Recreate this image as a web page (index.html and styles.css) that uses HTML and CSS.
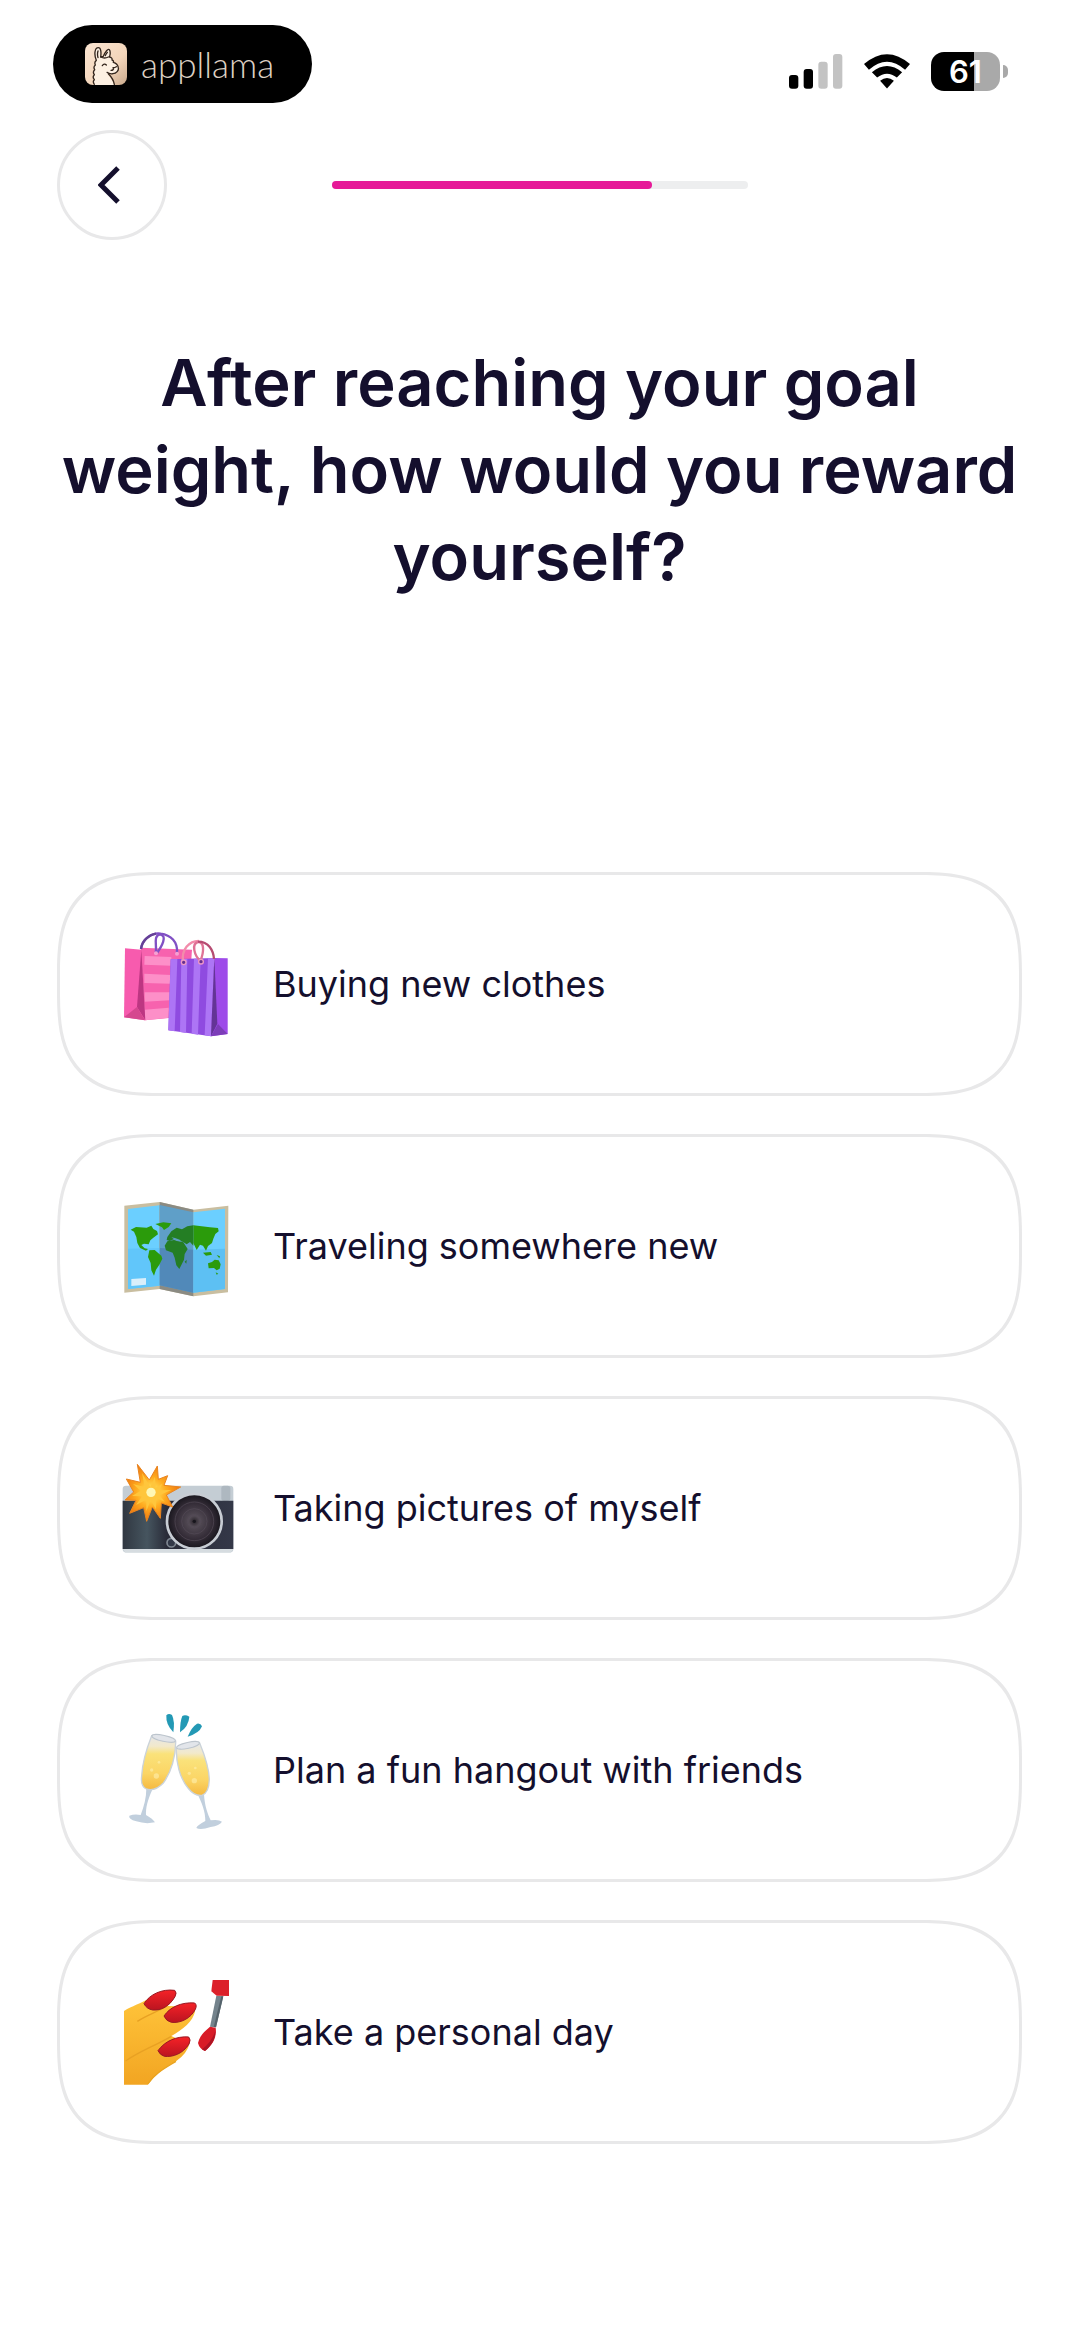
FILE: index.html
```html
<!DOCTYPE html>
<html lang="en">
<head>
  <meta charset="UTF-8">
  <meta name="viewport" content="width=device-width, initial-scale=1.0">
  <title>Reward</title>
  <link rel="stylesheet" href="styles.css">
</head>
<body>
  <div class="status">
    <div class="brand">
      <svg class="brand-icon" viewBox="0 0 126 126" aria-hidden="true">
        <defs>
          <linearGradient id="sand" x1="0" y1="0" x2="1" y2="1">
            <stop offset="0" stop-color="#fbe6d3"/>
            <stop offset=".6" stop-color="#f3d5ba"/>
            <stop offset="1" stop-color="#c9a98c"/>
          </linearGradient>
        </defs>
        <rect width="126" height="126" rx="24" fill="url(#sand)"/>
        <path d="M28 126q-6-10 0-16q-7-8 0-15q-6-8 1-15q-5-8 2-14q-4-9 3-14c-8-20-4-38 6-38c8 0 9 14 7 28l8-2c6-14 14-24 18-20c4 5 3 16 0 22q10 2 8 9q6 2 4 7c8 2 14 10 15 16c2 8-6 18-16 18q-8 2-16-2q2 8 8 14c6 8 10 14 12 22z" fill="#fdf0e2"/>
        <g fill="none" stroke="#33251c" stroke-width="4" stroke-linecap="round" stroke-linejoin="round">
          <path d="M28 124q-6-8 0-14q-7-8 0-15q-6-8 1-15q-5-8 2-14q-4-9 3-14c-8-20-4-38 6-38c8 0 9 14 7 28l8-2c6-14 14-24 18-20c4 5 3 16 0 22q10 2 8 9q6 2 4 7c8 2 14 10 15 16c2 8-6 18-16 18q-10 2-18-4"/>
          <path d="M70 92c8 8 16 20 18 32M39 24q-3 10 0 20M67 28q-5 6-6 10M52 68q6-8 12-2M84 74q6 0 10-3M86 74q0 8-8 8M48 42q10 6 22 0"/>
        </g>
      </svg>
      <span>appllama</span>
    </div>
    <div class="status-icons">
      <svg class="signal" viewBox="0 0 162 105" role="img" aria-label="Signal">
        <rect y="63" width="28" height="41" rx="9"/>
        <rect x="44" y="45" width="28" height="59" rx="9"/>
        <rect x="88" y="23" width="28" height="81" rx="9" fill="#c3c3c3"/>
        <rect x="132" width="28" height="104" rx="9" fill="#c3c3c3"/>
      </svg>
      <svg class="wifi" viewBox="0 0 140 105" role="img" aria-label="Wi-Fi">
        <path d="M0 30Q70-30 140 30L125 47Q70-2 15 47z"/>
        <path d="M24 55Q70 17 116 55L100 71Q70 47 40 71z"/>
        <path d="M49 81Q70 63 91 81L70 104z"/>
      </svg>
      <div class="battery"><span class="battery-body">61</span><span class="battery-cap"></span></div>
    </div>
  </div>

  <div class="nav">
    <button class="back" type="button" aria-label="Back">
      <svg viewBox="0 0 22 38" aria-hidden="true"><path d="M20 2L3 19L20 36" fill="none" stroke="#140f2d" stroke-width="5"/></svg>
    </button>
    <div class="progress"><div class="progress-fill" style="width: 77%"></div></div>
  </div>

  <main>
    <h1>After reaching your goal weight, how would you reward yourself?</h1>
    <div class="options">
      <button class="option" type="button">
        <svg viewBox="60 55 336 336" aria-hidden="true">
          <path d="M75 116L124 120L135 332L72 323z" fill="#f75bae"/>
          <path d="M122 114L276 120L262 320L135 332z" fill="#f762ae"/>
          <path d="M134 139L214 142V168L133 165zM133 192L212 196V222L133 220zM134 248L210 248V272L134 276zM134 300L206 294V324L135 332z" fill="#fd8fc8"/>
          <path d="M124 120L136 332L111 292z" fill="#bd3682"/>
          <path d="M72 323L111 292L135 332z" fill="#d5478f"/>
          <g fill="none" stroke="#8050c4" stroke-width="7">
            <path d="M123 118C126 86 158 68 182 72C212 76 234 96 231 130"/>
            <path d="M167 128C172 112 158 78 180 74C204 78 184 112 171 130"/>
          </g>
          <path d="M123 118C127 92 148 75 168 72" fill="none" stroke="#654196" stroke-width="7"/>
          <circle cx="168" cy="131" r="6" fill="#f6a0d2"/>
          <circle cx="231" cy="132" r="6" fill="#f6a0d2"/>
          <path d="M212 149L343 145L333 380L205 362z" fill="#8f4be0"/>
          <path d="M212 149L232 148L224 365L205 362zM244 148L262 148L258 370L240 367zM282 147L302 146L294 375L275 372zM324 146L343 145L333 380L314 377z" fill="#ad75f5"/>
          <path d="M343 145L383 146V373L333 380z" fill="#9e4be9"/>
          <path d="M343 145L352 342L333 380z" fill="#633496"/>
          <path d="M333 380L354 343L383 373z" fill="#7c3db8"/>
          <path d="M249 156C244 118 268 94 296 94" fill="none" stroke="#f28cab" stroke-width="7"/>
          <path d="M301 154C312 128 314 96 294 97C274 102 282 138 302 154" fill="none" stroke="#df7396" stroke-width="7"/>
          <path d="M294 96C326 96 340 122 342 148" fill="none" stroke="#b64c72" stroke-width="7"/>
          <g fill="#653091" stroke="#ee98c5" stroke-width="4">
            <circle cx="251" cy="158" r="7"/>
            <circle cx="303" cy="156" r="7"/>
          </g>
        </svg>
        <span>Buying new clothes</span>
      </button>

      <button class="option" type="button">
        <svg viewBox="60 31 336 336" aria-hidden="true">
          <path d="M73 78L179 67L280 90L385 78L384 338L280 350L179 328L73 339z" fill="#c9bea0"/>
          <path d="M84 88L179 77V318L84 328z" fill="#6bcfff"/>
          <path d="M179 67L280 90V350L179 328z" fill="#8b8b83"/>
          <path d="M179 76L280 98V339L179 317z" fill="#5f9fc8"/>
          <path d="M280 98L375 87V328L280 339z" fill="#6bcfff"/>
          <path d="M84 207L179 205V318L84 328z" fill="#61c6fa"/>
          <path d="M179 205L280 210V339L179 317z" fill="#5189b9"/>
          <path d="M280 210L375 207V328L280 339z" fill="#5dc0f3"/>
          <g fill="#2b9b0b">
            <path d="M92 150L108 142L140 144L154 138L160 148L171 154L174 164L160 174L151 182L146 194L132 192L124 196L134 206L144 208L138 213L120 205L112 190L109 172L102 156z"/>
            <path d="M166 133L190 128L214 131L206 142L192 151L186 143z"/>
            <path d="M148 212L164 211L184 228L187 237L178 255L168 270L162 288L154 272L152 250L144 232z"/>
            <path d="M280 137L330 143L354 145L356 155L346 163L340 177L336 190L324 199L318 213L309 198L300 195L290 211L280 190z"/>
            <path d="M324 251L336 247L344 240L356 242L362 254L359 267L350 272L342 265L326 266z"/>
            <path d="M309 219L332 217L336 225L318 228zM350 226L360 230L358 236zM347 278L355 282L350 285z"/>
          </g>
          <g fill="#247e24">
            <path d="M202 172L214 155L230 144L246 149L262 140L280 137V198L270 187L260 194L248 186L234 184L224 177L209 184L200 181z"/>
            <path d="M202 185L222 181L250 188L263 208L254 223L252 240L238 268L229 257L224 234L218 219L198 212L194 198z"/>
            <path d="M254 246L260 240L259 252z"/>
          </g>
          <path d="M214 173L225 175L239 180L246 186L230 184z" fill="#5d9fc0"/>
          <path d="M94 298L138 295V315L94 319z" fill="#d9effb"/>
        </svg>
        <span>Traveling somewhere new</span>
      </button>

      <button class="option" type="button">
        <svg viewBox="60 37 336 336" aria-hidden="true">
          <defs>
            <linearGradient id="body">
              <stop offset="0" stop-color="#303741"/>
              <stop offset=".22" stop-color="#46555f"/>
              <stop offset=".4" stop-color="#292b38"/>
              <stop offset="1" stop-color="#343848"/>
            </linearGradient>
            <radialGradient id="lens">
              <stop offset="0" stop-color="#282329"/>
              <stop offset=".2" stop-color="#534b55"/>
              <stop offset=".65" stop-color="#352d38"/>
              <stop offset="1" stop-color="#17151c"/>
            </radialGradient>
            <radialGradient id="flash" cx="153" cy="158" r="90" gradientUnits="userSpaceOnUse">
              <stop offset="0" stop-color="#fffbd0"/>
              <stop offset=".18" stop-color="#ffd84f"/>
              <stop offset=".5" stop-color="#ffac20"/>
              <stop offset="1" stop-color="#ed740c"/>
            </radialGradient>
          </defs>
          <rect x="68" y="138" width="332" height="200" rx="10" fill="#c4cdd4"/>
          <rect x="364" y="138" width="27" height="46" rx="8" fill="#aeb8c0"/>
          <path d="M68 183H400V328H68z" fill="url(#body)"/>
          <path d="M68 328H400L392 339H76z" fill="#d6dce0"/>
          <circle cx="214" cy="309" r="13" fill="#323847" stroke="#7f8791" stroke-width="5"/>
          <circle cx="283" cy="245" r="82" fill="url(#lens)" stroke="#c8cdd4" stroke-width="8"/>
          <g fill="none" stroke="#554c57" stroke-width="2">
            <circle cx="283" cy="245" r="58"/>
            <circle cx="283" cy="245" r="38"/>
            <circle cx="283" cy="245" r="20"/>
          </g>
          <circle cx="283" cy="245" r="5" fill="#17151c"/>
          <path d="M112 74L148 121L172 79L175 119L203 108L192 137L242 142L199 166L218 202L184 190L181 236L157 202L140 245L131 204L89 221L108 182L75 181L101 157L79 118L121 128z" fill="url(#flash)" stroke="#e98420" stroke-width="3"/>
          <path d="M126 100L151 142L165 111L167 144L187 132L178 152L214 151L179 167L194 186L169 176L168 209L152 182L139 215L139 180L108 196L126 170L96 169L122 153L99 133L134 142z" fill="#ffc63c"/>
          <circle cx="153" cy="158" r="14" fill="#fff8b5"/>
        </svg>
        <span>Taking pictures of myself</span>
      </button>

      <button class="option" type="button">
        <svg viewBox="60 43 336 336" aria-hidden="true">
          <defs>
            <linearGradient id="wine" x1="0" y1="0" x2="0" y2="1">
              <stop offset="0" stop-color="#e6e7ea"/>
              <stop offset=".2" stop-color="#f2e9cb"/>
              <stop offset=".34" stop-color="#fae27a"/>
              <stop offset=".7" stop-color="#fbd565"/>
              <stop offset="1" stop-color="#f5b941"/>
            </linearGradient>
          </defs>
          <g fill="#2399b5">
            <path d="M199 47Q206 40 216 46Q225 65 220 98Q197 75 199 47z"/>
            <path d="M247 49Q256 44 268 51Q266 80 240 98Q240 65 247 49z"/>
            <path d="M291 72Q302 70 306 80Q298 101 263 111Q274 83 291 72z"/>
          </g>
          <path d="M139 266L158 268C142 302 137 326 138 346Q159 358 165 368Q136 374 109 365Q84 358 88 348Q104 342 122 346C132 321 139 294 139 266z" fill="#c1cfdd"/>
          <path d="M294 286L312 284C314 319 323 343 332 362Q355 358 366 366Q359 378 332 382Q302 392 289 385Q291 377 316 364C316 334 305 310 294 286z" fill="#c1cfdd"/>
          <path d="M155 108Q190 104 227 124C228 168 214 218 190 250Q165 276 139 268Q121 259 125 229C127 188 140 146 155 108z" fill="url(#wine)" stroke="#cbd3da" stroke-width="4"/>
          <path d="M229 147Q263 124 299 130C315 169 327 202 328 239Q327 280 306 287Q283 290 264 265C239 235 228 188 229 147z" fill="url(#wine)" stroke="#cbd3da" stroke-width="4"/>
          <ellipse cx="191" cy="116" rx="36" ry="9" fill="#e2e5ea" stroke="#bdc5cd" stroke-width="3" transform="rotate(12 191 116)"/>
          <ellipse cx="264" cy="137" rx="35" ry="9" fill="#e2e5ea" stroke="#bdc5cd" stroke-width="3" transform="rotate(-12 264 137)"/>
          <g fill="#fff0ae" opacity=".6">
            <circle cx="169" cy="229" r="8"/>
            <circle cx="155" cy="211" r="5"/>
            <circle cx="177" cy="188" r="4"/>
            <circle cx="283" cy="243" r="8"/>
            <circle cx="268" cy="221" r="5"/>
            <circle cx="286" cy="205" r="4"/>
          </g>
        </svg>
        <span>Plan a fun hangout with friends</span>
      </button>

      <button class="option" type="button">
        <svg viewBox="60 49 336 336" aria-hidden="true">
          <defs>
            <linearGradient id="skin" x1="0" y1="0" x2="0" y2="1">
              <stop offset="0" stop-color="#ffc53b"/>
              <stop offset="1" stop-color="#f2a522"/>
            </linearGradient>
            <linearGradient id="nail" x1="0" y1="0" x2="0" y2="1">
              <stop offset="0" stop-color="#f52227"/>
              <stop offset="1" stop-color="#bb1420"/>
            </linearGradient>
          </defs>
          <path d="M72 154C98 138 118 134 148 116L222 108Q218 128 202 139L230 140L286 146C286 176 258 205 214 229L246 244L269 251Q261 283 228 305C197 324 168 340 144 375H72z" fill="url(#skin)"/>
          <path d="M77 304C116 276 160 261 214 230M112 185C140 167 168 158 196 142" fill="none" stroke="#e8a123" stroke-width="4"/>
          <path d="M144 372C165 340 198 324 228 305" fill="none" stroke="#e9a31f" stroke-width="4"/>
          <g fill="url(#nail)" stroke="#981923" stroke-width="3">
            <path d="M132 132C149 104 186 87 224 92Q232 99 225 111C208 140 184 153 158 151Q140 148 132 132z"/>
            <path d="M192 169C210 142 244 127 284 130Q292 136 286 149C272 176 243 191 214 188Q198 184 192 169z"/>
            <path d="M174 273C195 244 230 229 266 232Q274 240 267 253C249 282 219 293 193 290Q180 286 174 273z"/>
          </g>
          <path d="M349 108L370 110L348 203L330 201z" fill="#74838c"/>
          <path d="M364 110L370 110L348 203L341 202z" fill="#55636b"/>
          <path d="M338 61H387V109L350 108L334 95z" fill="#dc202a"/>
          <path d="M330 201L347 204C351 229 340 255 315 274Q298 267 294 250C300 226 316 213 330 201z" fill="#d81b27"/>
          <path d="M346 215C347 239 332 261 315 274L306 269Q333 249 346 215z" fill="#ad1424"/>
        </svg>
        <span>Take a personal day</span>
      </button>
    </div>
  </main>
</body>
</html>
```
FILE: styles.css
```css
* {
  box-sizing: border-box;
}
body {
  margin: 0;
  padding: 25px 58px 190px 57px;
  background-color: #fff;
  color: #140f2d;
  font-family: Inter, "Noto Sans", sans-serif;
}
button {
  font: inherit;
  color: inherit;
  background-color: #fff;
  cursor: pointer;
}
.status {
  display: flex;
  justify-content: space-between;
  margin: 0 14px 0 -4px;
}
.brand {
  display: flex;
  align-items: center;
  gap: 14px;
  height: 78px;
  padding: 0 38px 0 32px;
  border-radius: 39px;
  background-color: #000;
  color: #ddd0c3;
  font-family: Lato, sans-serif;
  font-size: 35px;
  font-weight: 300;
}
.brand-icon {
  width: 42px;
  height: 42px;
}
.status-icons {
  display: flex;
  align-items: center;
  gap: 21px;
  padding-top: 14px;
}
.signal {
  width: 54px;
  height: 35px;
}
.wifi {
  width: 46px;
  height: 35px;
}
.battery {
  display: flex;
  align-items: center;
  gap: 3px;
}
.battery-body {
  width: 69px;
  height: 39px;
  border-radius: 13px;
  background: linear-gradient(to right, #000 62%, #a9a9a9 62%);
  color: #fff;
  font-size: 31px;
  font-weight: 600;
  line-height: 39px;
  text-align: center;
}
.battery-cap {
  width: 5px;
  height: 13px;
  border-radius: 0 7px 7px 0;
  background-color: #a9a9a9;
}
.nav {
  display: grid;
  grid-template-columns: 1fr 416px 1fr;
  align-items: center;
  margin-top: 27px;
}
.back {
  display: flex;
  align-items: center;
  justify-content: center;
  width: 110px;
  height: 110px;
  padding: 0 6px 0 0;
  border: 3px solid #e8e8e9;
  border-radius: 50%;
}
.back svg {
  width: 22px;
  height: 38px;
}
.progress {
  height: 8px;
  border-radius: 4px;
  background-color: #edeeef;
}
.progress-fill {
  height: 8px;
  border-radius: 4px;
  background-color: #e61a98;
}
h1 {
  margin: 99px -10px 0;
  font-size: 65px;
  font-weight: 600;
  line-height: 87px;
  text-align: center;
}
.options {
  display: flex;
  flex-direction: column;
  gap: 38px;
  margin-top: 272px;
}
.option {
  display: flex;
  align-items: center;
  gap: 41px;
  height: 224px;
  padding: 0 56px 0 60px;
  border: 3px solid #e8e8e9;
  border-radius: 80px;
  font-size: 36px;
  text-align: left;
}
.option svg {
  flex: none;
  width: 112px;
  height: 112px;
  overflow: visible;
}
@supports (corner-shape: squircle) {
  .option {
    border-radius: 105px;
    corner-shape: superellipse(1.5);
  }
}
```
